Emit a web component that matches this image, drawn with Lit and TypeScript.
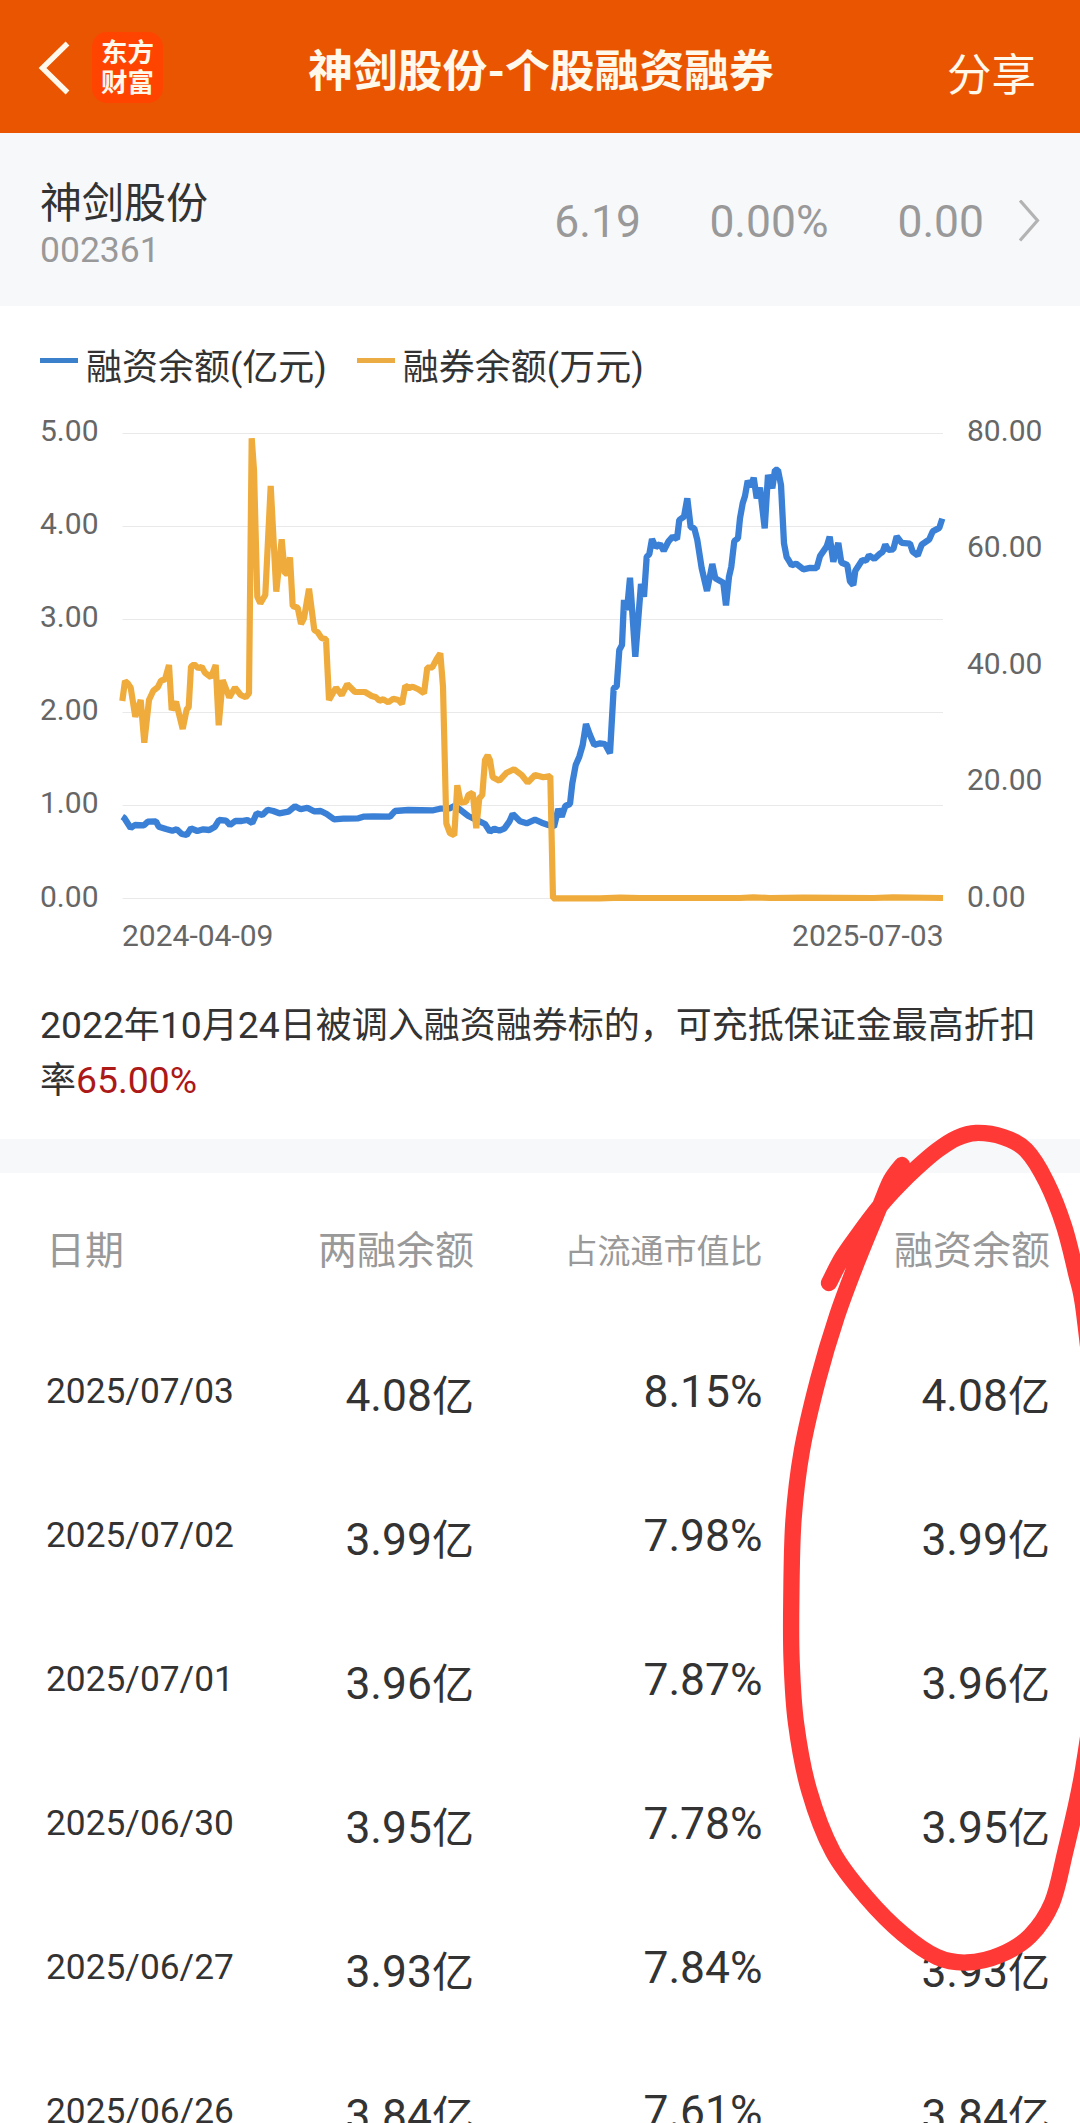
import { LitElement, html, svg, css } from "lit";
import { customElement, property } from "lit/decorators.js";

type Pt = [number, number];

/* Balance curves, in plot units (x 122..943, y 416..911). */
const at = (ox: number, oy: number, sy: number, flat: number[]): Pt[] => {
  const out: Pt[] = [];
  for (let i = 0; i < flat.length; i += 2) out.push([ox + flat[i] / 3, oy + flat[i + 1] / sy]);
  return out;
};

const LENDING: Pt[] = [
  ...at(0, 620, 3, [
    367, 243, 375, 183, 383, 190, 392, 203, 406, 290, 422, 240, 433, 368, 447, 240, 460, 212, 473, 202, 483, 182, 495, 178,
    507, 135, 515, 270, 528, 245, 548, 327, 560, 268, 566, 262, 573, 140, 582, 133, 595, 145, 605, 140, 615, 158, 633, 172,
    647, 135, 656, 316, 668, 180, 688, 232, 705, 203, 722, 225, 737, 232, 747, 220,
  ]),
  ...at(0, 310, 3, [
    755, 385, 762, 480, 772, 860, 781, 880, 796, 855, 812, 528, 829, 845, 845, 688, 854, 790, 862, 790, 870, 742, 878, 888,
    893, 893, 903, 942, 912, 925, 927, 836, 943, 960, 953, 967, 965, 985, 978, 987,
  ]),
  ...at(0, 620, 3, [987, 240, 1008, 203, 1025, 225, 1042, 193]),
  ...at(340, 420, 3, [
    45, 816, 75, 816, 95, 828, 108, 832, 118, 842, 130, 838, 145, 847, 160, 836, 175, 840, 186, 852, 196, 797, 207, 804,
    218, 800, 235, 808, 252, 820, 262, 743, 277, 742, 290, 717, 301, 700, 309, 800, 319, 1210, 330, 1240, 343, 1246,
    352, 1096, 362, 1148, 378, 1145, 385, 1125, 398, 1118, 409, 1225, 418, 1135, 427, 1125, 435, 1020, 443, 1006,
    450, 1020, 458, 1072, 478, 1082, 500, 1058, 522, 1048, 545, 1065, 563, 1088, 585, 1065, 610, 1072, 631, 1068,
    639, 1435, 780, 1435, 840, 1433, 900, 1434, 1200, 1434, 1240, 1432, 1290, 1434, 1390, 1433, 1600, 1434, 1660, 1432, 1809, 1434,
  ]),
];

const FINANCING: Pt[] = [
  ...at(0, 620, 3, [
    367, 590, 373, 594, 392, 624, 405, 615, 432, 616, 443, 605, 468, 604, 476, 620, 498, 627, 517, 632, 530, 628, 545, 642,
    560, 645, 573, 625, 592, 633, 610, 628, 628, 630, 645, 620, 657, 600, 678, 602, 690, 615, 706, 603, 725, 603, 742, 600,
    757, 609, 770, 580, 787, 585, 803, 569, 820, 573, 838, 580, 865, 575, 885, 559, 902, 568, 922, 563, 942, 574, 962, 573,
    980, 582, 1002, 598, 1030, 596,
  ]),
  ...at(340, 420, 3, [
    20, 1196, 55, 1195, 70, 1190, 100, 1189, 150, 1190, 165, 1173, 205, 1170, 280, 1171, 300, 1166, 330, 1165, 343, 1158,
    355, 1165, 385, 1188, 400, 1195, 435, 1212, 450, 1235, 463, 1226, 478, 1232, 493, 1226, 508, 1205, 518, 1182,
    528, 1192, 540, 1204, 560, 1210, 585, 1199, 605, 1208, 625, 1215, 642, 1220, 655, 1167, 665, 1190, 676, 1158,
    690, 1152, 697, 1090, 707, 1035, 718, 1010, 728, 975, 738, 912, 750, 945, 763, 975, 780, 970, 795, 972, 810, 1000,
    821, 804, 830, 800, 838, 690, 846, 675, 852, 540, 861, 570, 870, 473, 886, 710, 903, 492,
  ]),
  ...at(540, 420, 3, [
    312, 530, 320, 410, 328, 403, 336, 357, 347, 382, 360, 372, 371, 392, 385, 365, 398, 350, 411, 357, 418, 300, 432, 290,
    442, 235, 452, 322, 463, 325, 472, 360, 485, 445, 501, 513, 517, 432, 526, 475, 550, 488, 558, 556, 567, 470, 574, 440,
    583, 363, 594, 355, 600, 295, 608, 250, 615, 228, 623, 182, 632, 200, 641, 173, 650, 235, 660, 203, 674, 325, 684, 165,
    697, 205, 705, 150, 714, 150, 723, 195, 732, 370, 740, 412,
  ]),
  ...at(780, 400, 2.8, [
    25, 447, 35, 463, 48, 458, 70, 474, 90, 470, 110, 471, 120, 437, 140, 410, 149, 383, 160, 453, 175, 400, 184, 455,
    202, 462, 210, 508, 220, 518, 226, 478, 247, 448, 258, 450, 267, 435, 283, 445, 300, 430, 308, 425, 316, 405, 325, 420,
    340, 418, 350, 382, 365, 400, 390, 402, 398, 425, 413, 435, 425, 405, 448, 390, 458, 368, 478, 358, 487, 332,
  ]),
];

/* Hand-drawn marker loop, in page units. */
const MARKER: Pt[] = [
  [829, 1283], [842, 1258], [858, 1235], [880, 1206], [898, 1186], [916.5, 1168], [937, 1150.5], [957, 1138], [976, 1133],
  [1003, 1137], [1026, 1150], [1046.5, 1182], [1064, 1226], [1076, 1273], [1084, 1312], [1096, 1430], [1101, 1540],
  [1097, 1660], [1083, 1770], [1065, 1853], [1052, 1903], [1030, 1936], [1000, 1955], [966.7, 1962.5], [937, 1957],
  [903, 1934], [867, 1898], [833, 1852], [809, 1790], [796, 1723], [791.6, 1660], [791.3, 1600], [793.5, 1520],
  [802, 1450], [818, 1380], [837, 1316], [859, 1257], [880, 1206], [891, 1180], [902, 1165],
];

const line = (pts: Pt[]) => pts.map((p, i) => `${i ? "L" : "M"}${p[0].toFixed(1)} ${p[1].toFixed(1)}`).join("");

/* Catmull-Rom spline through the points, written as cubic segments. */
const smooth = (p: Pt[]) => {
  let d = `M${p[0][0]} ${p[0][1]}`;
  for (let i = 0; i < p.length - 1; i++) {
    const a = p[Math.max(i - 1, 0)], b = p[i], c = p[i + 1], e = p[Math.min(i + 2, p.length - 1)];
    const f = (n: number) => n.toFixed(1);
    d += `C${f(b[0] + (c[0] - a[0]) / 6)} ${f(b[1] + (c[1] - a[1]) / 6)} ${f(c[0] - (e[0] - b[0]) / 6)} ${f(c[1] - (e[1] - b[1]) / 6)} ${c[0]} ${c[1]}`;
  }
  return d;
};

@customElement("balance-chart")
export class BalanceChart extends LitElement {
  static styles = css`
    :host { display: block; color: #666; font-size: 30px; line-height: 30px; }
    .legend { display: flex; gap: 30px; color: #333; font-size: 36px; line-height: 36px; margin-bottom: 30px; }
    .item { display: flex; gap: 8px; white-space: nowrap; }
    .swatch { width: 38px; height: 5px; margin-top: 8px; flex: none; }
    .blue { background: #3b80cb; }
    .gold { background: #ebad43; }
    .body { display: grid; grid-template-columns: 82px 821px 1fr; height: 495.6px; }
    .axis { display: flex; flex-direction: column; justify-content: space-between; }
    .right { padding-left: 24px; }
    .plot { display: block; overflow: visible; }
    .dates { display: flex; justify-content: space-between; margin: 9.4px 96.5px 0 82px; }
  `;

  render() {
    const grid = [433, 526, 619, 712, 805, 898];
    return html`
      <div class="legend">
        <div class="item"><span class="swatch blue"></span><span>融资余额(亿元)</span></div>
        <div class="item"><span class="swatch gold"></span><span>融券余额(万元)</span></div>
      </div>
      <div class="body">
        <div class="axis">${["5.00", "4.00", "3.00", "2.00", "1.00", "0.00"].map((t) => html`<span>${t}</span>`)}</div>
        <svg class="plot" width="821" height="495" viewBox="122 416 821 495" fill="none">
          ${grid.map((y) => svg`<path d="M122.5 ${y + 0.5}H943" stroke="#e9e9e9"/>`)}
          <path d=${line(FINANCING)} stroke="#3a80d6" stroke-width="6.3" stroke-linejoin="bevel"/>
          <path d=${line(LENDING)} stroke="#efac3c" stroke-width="6.2" stroke-linejoin="bevel"/>
        </svg>
        <div class="axis right">${["80.00", "60.00", "40.00", "20.00", "0.00"].map((t) => html`<span>${t}</span>`)}</div>
      </div>
      <div class="dates"><span>2024-04-09</span><span>2025-07-03</span></div>
    `;
  }
}

interface Row { date: string; total: string; ratio: string; financing: string; }

@customElement("balance-table")
export class BalanceTable extends LitElement {
  @property({ attribute: false }) rows: Row[] = [];

  static styles = css`
    :host { display: block; color: #333; }
    .row { display: grid; grid-template-columns: 200px 228px 288.5px 287.5px; padding-left: 46px; height: 144px; text-align: right; white-space: nowrap; font-size: 44.4px; line-height: 45px; }
    .head { height: 167px; color: #999; font-size: 39px; line-height: 39px; padding-top: 59px; box-sizing: border-box; }
    .first { text-align: left; }
    .small { font-size: 33px; line-height: 33px; padding-top: 3px; }
    .date { text-align: left; font-size: 35.3px; line-height: 36px; padding-top: 33px; }
    .money { padding-top: 34px; }
    .unit { font-size: 42px; }
    .ratio { padding-top: 29.5px; }
  `;

  private money(v: string) {
    return html`<span class="money">${v}<span class="unit">亿</span></span>`;
  }

  render() {
    return html`
      <div class="row head">
        <span class="first">日期</span><span>两融余额</span><span class="small">占流通市值比</span><span>融资余额</span>
      </div>
      ${this.rows.map((r) => html`
        <div class="row">
          <span class="date">${r.date}</span>${this.money(r.total)}<span class="ratio">${r.ratio}</span>${this.money(r.financing)}
        </div>`)}
    `;
  }
}

@customElement("app-root")
export class AppRoot extends LitElement {
  static styles = css`
    :host { display: block; position: relative; width: 1080px; height: 2123px; overflow: hidden; background: #fff; color: #333; font-family: Roboto, "Noto Sans CJK SC", sans-serif; }
    .bar { display: grid; grid-template-columns: 1fr auto 1fr; align-items: start; height: 133px; background: #ea5502; color: #fff9ec; font-size: 45px; line-height: 45px; }
    .left { display: flex; padding: 32px 0 0 38px; gap: 22px; }
    .back { display: block; width: 32px; height: 71px; }
    .logo { width: 71px; height: 71px; border-radius: 15px; background: #ff4400; font-size: 26.5px; line-height: 30px; font-weight: 700; text-align: center; padding-top: 5.5px; box-sizing: border-box; }
    .logo span { display: block; }
    .title { padding: 49px 0 0 2px; font-weight: 700; font-size: 44.8px; }
    .share { padding: 54px 44px 0 0; text-align: right; font-size: 44.5px; }
    .stock { display: flex; height: 173px; background: #f7f8fa; padding: 0 39px 0 40px; box-sizing: border-box; }
    .id { flex: 1; padding-top: 45.5px; }
    .name { font-size: 42px; line-height: 49px; }
    .code { font-size: 35.5px; line-height: 42px; padding-top: 1px; color: #999; }
    .quote { display: flex; color: #999; font-size: 44.4px; line-height: 45px; padding-top: 66.5px; }
    .quote span { text-align: right; }
    .price { margin-right: 68.5px; }
    .pct { margin-right: 69px; }
    .chev { display: block; width: 22px; height: 45px; margin-left: 35px; }
    .chart { height: 833px; padding: 44px 40px 0; box-sizing: border-box; }
    .note { margin-top: 47.5px; font-size: 36px; line-height: 54.7px; white-space: nowrap; }
    .note div { height: 54.7px; }
    .num { font-size: 37.3px; }
    .rate { color: #ac1917; }
    .band { height: 34px; background: #f7f8fa; }
    .marker { position: absolute; inset: 0; pointer-events: none; }
  `;

  private rows: Row[] = [
    { date: "2025/07/03", total: "4.08", ratio: "8.15%", financing: "4.08" },
    { date: "2025/07/02", total: "3.99", ratio: "7.98%", financing: "3.99" },
    { date: "2025/07/01", total: "3.96", ratio: "7.87%", financing: "3.96" },
    { date: "2025/06/30", total: "3.95", ratio: "7.78%", financing: "3.95" },
    { date: "2025/06/27", total: "3.93", ratio: "7.84%", financing: "3.93" },
    { date: "2025/06/26", total: "3.84", ratio: "7.61%", financing: "3.84" },
  ];

  render() {
    const n = (t: string) => html`<span class="num">${t}</span>`;
    return html`
      <header class="bar">
        <div class="left">
          <svg class="back" viewBox="0 0 32 71" fill="none"><path d="M29.5 11.5L4.5 36L29.5 60.5" stroke="#fff9ec" stroke-width="5.4"/></svg>
          <div class="logo"><span>东方</span><span>财富</span></div>
        </div>
        <div class="title">神剑股份-个股融资融券</div>
        <div class="share">分享</div>
      </header>
      <section class="stock">
        <div class="id"><div class="name">神剑股份</div><div class="code">002361</div></div>
        <div class="quote">
          <span class="price">6.19</span><span class="pct">0.00%</span><span>0.00</span>
          <svg class="chev" viewBox="0 0 22 45" fill="none"><path d="M1 0.5L18.5 20.5L1 40.5" stroke="#b3b3b3" stroke-width="3.2"/></svg>
        </div>
      </section>
      <section class="chart">
        <balance-chart></balance-chart>
        <div class="note">
          <div>${n("2022")}年${n("10")}月${n("24")}日被调入融资融券标的，可充抵保证金最高折扣</div>
          <div>率<span class="num rate">65.00%</span></div>
        </div>
      </section>
      <div class="band"></div>
      <balance-table .rows=${this.rows}></balance-table>
      <svg class="marker" width="1080" height="2123" viewBox="0 0 1080 2123" fill="none">
        <path d=${smooth(MARKER)} stroke="#ff3936" stroke-width="16.3" stroke-linecap="round" stroke-linejoin="round"/>
      </svg>
    `;
  }
}
